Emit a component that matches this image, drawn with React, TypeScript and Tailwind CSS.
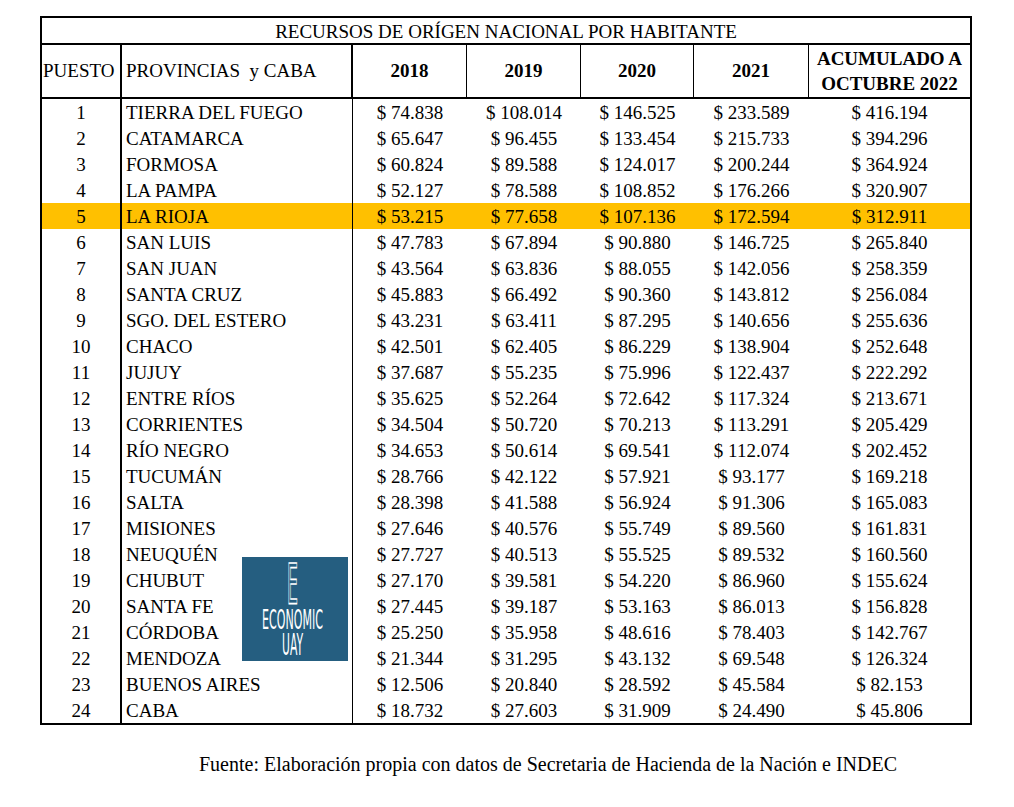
import React from "react";

type Row = [string, string, string, string, string, string];

const rows: Row[] = [
  ["TIERRA DEL FUEGO", "74.838", "108.014", "146.525", "233.589", "416.194"],
  ["CATAMARCA", "65.647", "96.455", "133.454", "215.733", "394.296"],
  ["FORMOSA", "60.824", "89.588", "124.017", "200.244", "364.924"],
  ["LA PAMPA", "52.127", "78.588", "108.852", "176.266", "320.907"],
  ["LA RIOJA", "53.215", "77.658", "107.136", "172.594", "312.911"],
  ["SAN LUIS", "47.783", "67.894", "90.880", "146.725", "265.840"],
  ["SAN JUAN", "43.564", "63.836", "88.055", "142.056", "258.359"],
  ["SANTA CRUZ", "45.883", "66.492", "90.360", "143.812", "256.084"],
  ["SGO. DEL ESTERO", "43.231", "63.411", "87.295", "140.656", "255.636"],
  ["CHACO", "42.501", "62.405", "86.229", "138.904", "252.648"],
  ["JUJUY", "37.687", "55.235", "75.996", "122.437", "222.292"],
  ["ENTRE RÍOS", "35.625", "52.264", "72.642", "117.324", "213.671"],
  ["CORRIENTES", "34.504", "50.720", "70.213", "113.291", "205.429"],
  ["RÍO NEGRO", "34.653", "50.614", "69.541", "112.074", "202.452"],
  ["TUCUMÁN", "28.766", "42.122", "57.921", "93.177", "169.218"],
  ["SALTA", "28.398", "41.588", "56.924", "91.306", "165.083"],
  ["MISIONES", "27.646", "40.576", "55.749", "89.560", "161.831"],
  ["NEUQUÉN", "27.727", "40.513", "55.525", "89.532", "160.560"],
  ["CHUBUT", "27.170", "39.581", "54.220", "86.960", "155.624"],
  ["SANTA FE", "27.445", "39.187", "53.163", "86.013", "156.828"],
  ["CÓRDOBA", "25.250", "35.958", "48.616", "78.403", "142.767"],
  ["MENDOZA", "21.344", "31.295", "43.132", "69.548", "126.324"],
  ["BUENOS AIRES", "12.506", "20.840", "28.592", "45.584", "82.153"],
  ["CABA", "18.732", "27.603", "31.909", "24.490", "45.806"],
];

function Logo() {
  return (
    <svg
      className="absolute left-[242px] top-[557px]"
      width="106"
      height="104"
      viewBox="0 0 106 104"
    >
      <rect x="0" y="0" width="106" height="104" fill="#255e80" />
      <text
        x="45"
        y="46"
        textLength="11"
        lengthAdjust="spacingAndGlyphs"
        fontSize="56"
        fontFamily="'DejaVu Sans', sans-serif"
        fill="none"
        stroke="#ffffff"
        strokeWidth="1.6"
      >
        E
      </text>
      <text
        x="20"
        y="72"
        textLength="61"
        lengthAdjust="spacingAndGlyphs"
        fontSize="26"
        fontFamily="'DejaVu Sans', sans-serif"
        fill="#ffffff"
      >
        ECONOMIC
      </text>
      <text
        x="40"
        y="98"
        textLength="21"
        lengthAdjust="spacingAndGlyphs"
        fontSize="30"
        fontFamily="'DejaVu Sans', sans-serif"
        fill="#ffffff"
      >
        UAY
      </text>
    </svg>
  );
}

export default function App() {
  return (
    <div className="relative w-[1014px] h-[807px] bg-white text-black font-['Liberation_Serif','Times_New_Roman',serif]">
      <div className="pt-[16px] pl-[40px]">
        <div className="w-[932px] border-2 border-black text-[19px]">
          {/* Title */}
          <div className="h-[27px] border-b-2 border-black flex items-center justify-center leading-none pt-[2px]">
            RECURSOS DE ORÍGEN NACIONAL POR HABITANTE
          </div>
          {/* Header */}
          <div className="flex h-[54px] border-b-2 border-black">
            <div className="w-[80px] border-r-2 border-black flex items-center pl-[1px]">PUESTO</div>
            <div className="w-[231px] border-r-2 border-black flex items-center pl-[4px] whitespace-pre">
              {"PROVINCIAS  y CABA"}
            </div>
            <div className="w-[114px] border-r border-black flex items-center justify-center font-bold">2018</div>
            <div className="w-[114px] border-r border-black flex items-center justify-center font-bold">2019</div>
            <div className="w-[113px] border-r border-black flex items-center justify-center font-bold">2020</div>
            <div className="w-[115px] border-r border-black flex items-center justify-center font-bold">2021</div>
            <div className="w-[161px] flex flex-col items-center justify-center font-bold leading-[25px]">
              <span>ACUMULADO A</span>
              <span>OCTUBRE 2022</span>
            </div>
          </div>
          {/* Data */}
          {rows.map((r, i) => (
            <div
              key={i}
              className={`flex h-[26px] leading-[28px] ${i === 4 ? "bg-[#ffc000]" : ""}`}
            >
              <div className="w-[80px] border-r-2 border-black text-center">{i + 1}</div>
              <div className="w-[231px] border-r border-black pl-[4px] whitespace-nowrap">{r[0]}</div>
              <div className="w-[114px] text-center">$ {r[1]}</div>
              <div className="w-[114px] text-center">$ {r[2]}</div>
              <div className="w-[113px] text-center">$ {r[3]}</div>
              <div className="w-[115px] text-center">$ {r[4]}</div>
              <div className="w-[161px] text-center">$ {r[5]}</div>
            </div>
          ))}
        </div>
        <div className="mt-[29px] pl-[159px] text-[20px] leading-none whitespace-nowrap">
          Fuente: Elaboración propia con datos de Secretaria de Hacienda de la Nación e INDEC
        </div>
      </div>
      <Logo />
    </div>
  );
}
